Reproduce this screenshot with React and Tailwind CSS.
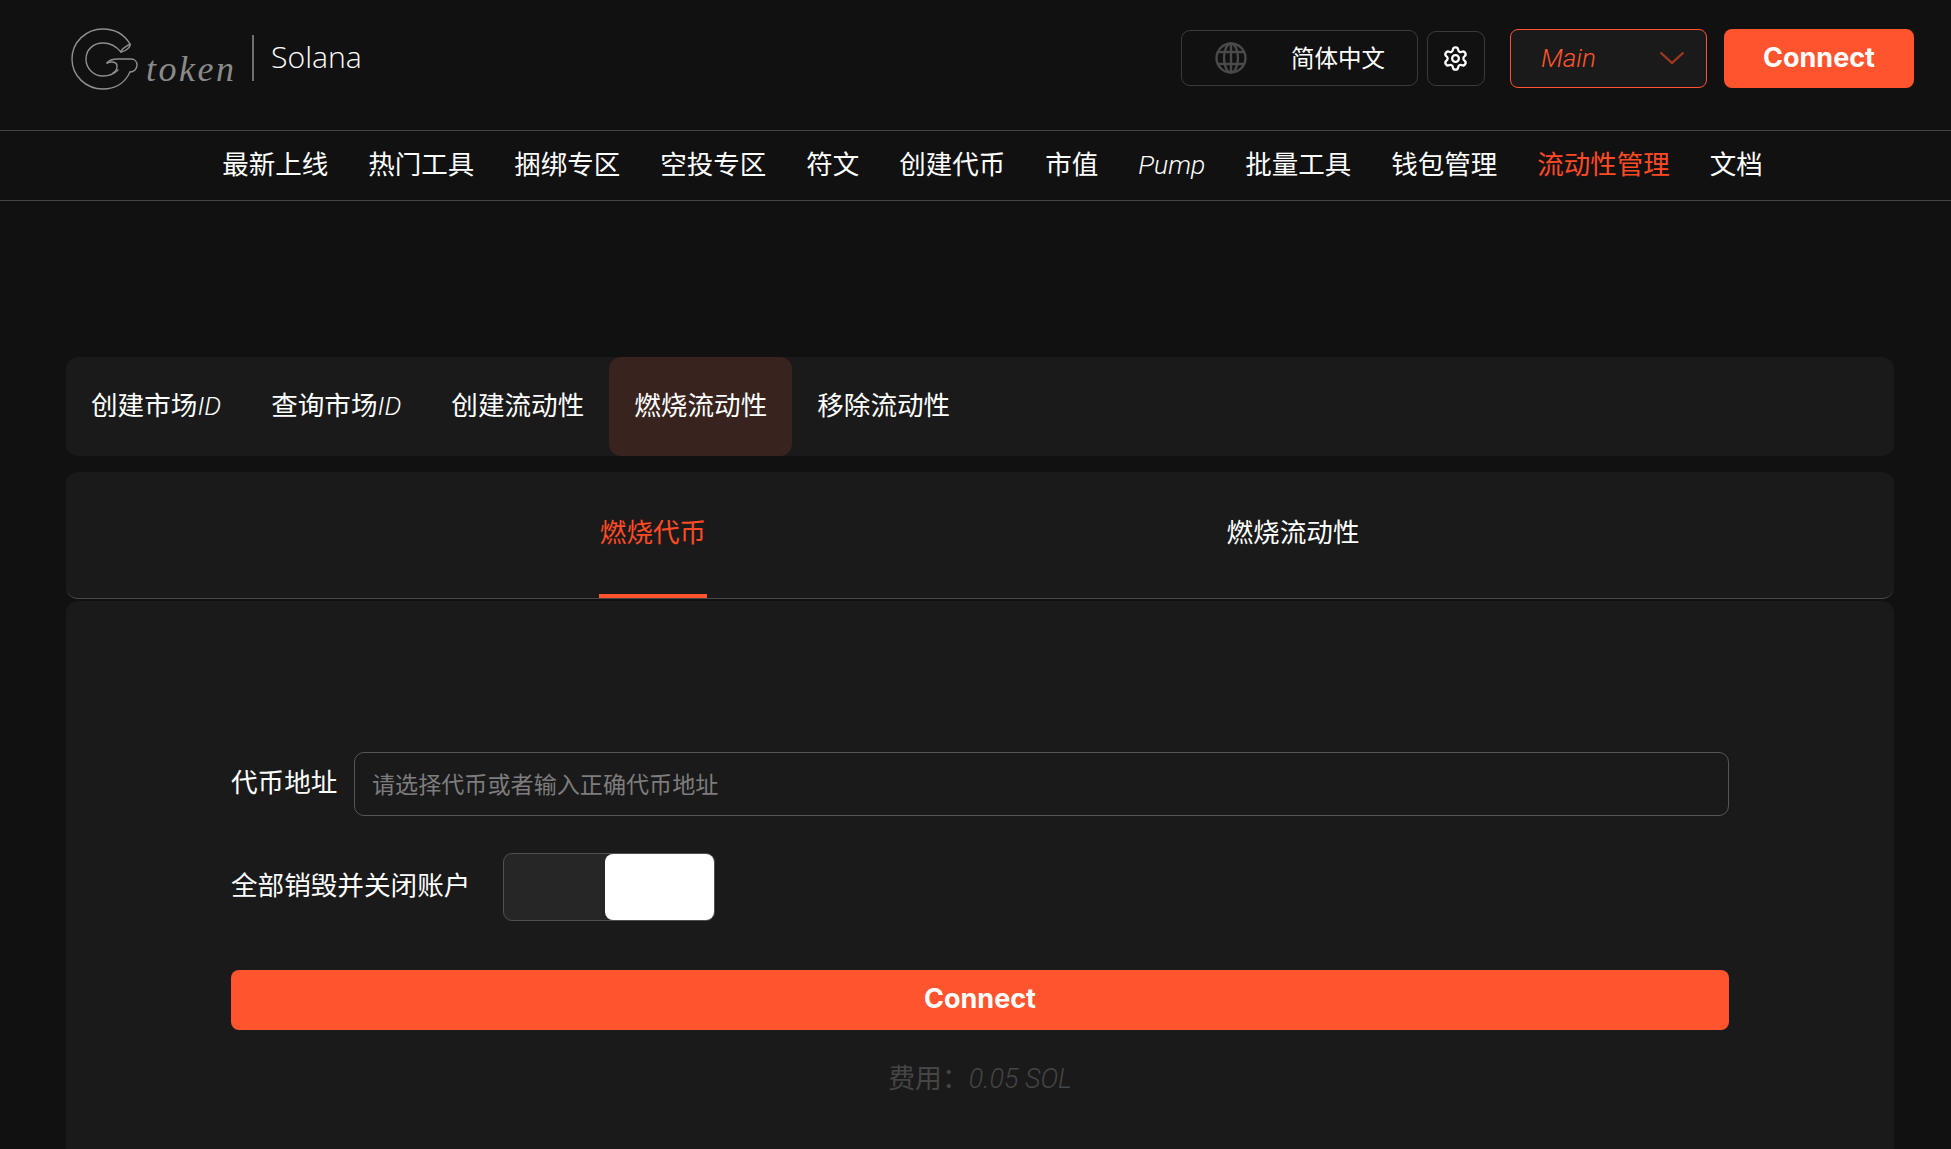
import React from "react";
import { Settings } from "lucide-react";

const cjk = "font-['Roboto','Noto_Sans_CJK_SC',sans-serif]";

function Logo() {
  return (
    <svg width="70" height="64" viewBox="70 26 70 64" fill="none" stroke="#8f8f8f" strokeWidth="1.4" strokeLinecap="round" className="shrink-0">
      <path d="M130 43 C124 33 114 28 103 28 C86 28 72 41 72 58 C72 75 86 88 103 88 C115 88 125 82 130 71" />
      <path d="M121 51 C116 45 110 42 103 42 C93 42 86 49 86 58 C86 68 94 75 103 75 C109 75 114 73 118 69" />
      <path d="M121 51 C121 48 127 45 130 43 C131 46 126 50 121 51 Z" />
      <path d="M107 62 C109 59 113 58 118 58 L131 58 C135 58 137 61 137 64 C137 68 134 71 130 71" />
      <path d="M107 62 C112 60 117 61 117 65 C117 68 115 71 113 72" />
    </svg>
  );
}

function Globe() {
  return (
    <svg width="32" height="32" viewBox="0 0 32 32" fill="none" stroke="#4a4a4a" strokeWidth="2.4" className="shrink-0">
      <circle cx="16" cy="16" r="14.5" />
      <ellipse cx="16" cy="16" rx="7" ry="14.5" />
      <path d="M16 1.5V30.5M3 10H29M3 22H29" />
    </svg>
  );
}

const navItems = ["最新上线", "热门工具", "捆绑专区", "空投专区", "符文", "创建代币", "市值", "Pump", "批量工具", "钱包管理", "流动性管理", "文档"];
const tabs = ["创建市场ID", "查询市场ID", "创建流动性", "燃烧流动性", "移除流动性"];

function Txt({ s }) {
  const m = s.match(/^([^A-Za-z]*)([A-Za-z]+)$/);
  if (!m) return s;
  return (
    <>
      {m[1]}
      <span className="italic font-light">{m[2]}</span>
    </>
  );
}

export default function App() {
  return (
    <div className={`h-[1149px] overflow-hidden bg-[#111111] text-white ${cjk}`}>
      <header className="h-[131px] border-b border-[#444444] flex items-start pl-[70px] pr-[37px]">
        <div className="flex items-start pt-[27px]">
          <Logo />
          <span className="font-['Liberation_Serif',serif] italic text-[36px] leading-none tracking-[2.5px] text-[#8a8a8a] ml-[6px] mt-[24px] w-[106px]">token</span>
          <div className="w-[2px] h-[46px] bg-[#6f6f6f] mt-[8px]" />
          <span className="font-['Open_Sans',sans-serif] font-light text-[30.2px] leading-none ml-[17px] mt-[15px]">Solana</span>
        </div>
        <div className="ml-auto flex items-start">
          <div className="mt-[30px] w-[237px] h-[56px] rounded-[9px] border border-[#3a3a3a] flex items-center pl-[33px]">
            <Globe />
            <span className="text-[23.5px] ml-[44px] leading-none pt-[3px]">简体中文</span>
          </div>
          <div className="mt-[31px] ml-[9px] w-[58px] h-[55px] rounded-[9px] border border-[#3a3a3a] flex items-center justify-center pr-[2px] pb-[1px]">
            <Settings size={27} strokeWidth={2} className="text-white" />
          </div>
          <div className="mt-[29px] ml-[25px] w-[197px] h-[59px] rounded-[8px] border border-[#ff542d] bg-[#1a1a1a] flex items-center pl-[30px] pr-[21px] justify-between">
            <span className="italic font-light text-[26px] leading-none text-[#ff542d] pb-[2px]">Main</span>
            <svg width="26" height="14" viewBox="0 0 26 14" fill="none" stroke="#a5391f" strokeWidth="2.2" className="mb-[2px]">
              <path d="M1.5 1.5L13 12L24.5 1.5" />
            </svg>
          </div>
          <button className="mt-[29px] ml-[17px] w-[190px] h-[59px] rounded-[8px] bg-[#ff542d] text-[27px] font-bold font-['Inter',sans-serif] text-white flex items-center justify-center">Connect</button>
        </div>
      </header>

      <nav className="h-[70px] border-b border-[#444444] flex items-center justify-center gap-[40px] pl-[34px] text-[26.5px] leading-none">
        {navItems.map((n) => (
          <span key={n} className={n === "流动性管理" ? "text-[#ff4a26]" : n === "Pump" ? "italic font-light" : ""}>{n}</span>
        ))}
      </nav>

      <main className="pl-[66px] pr-[57px] pt-[156px]">
        <div className="h-[99px] rounded-[12px] bg-[#1a1a1a] flex text-[26.6px]">
          {tabs.map((t, i) => (
            <div key={t} className={`px-[25px] flex items-center rounded-[12px] pb-[2px] ${i === 3 ? "bg-[#38231e]" : ""}`}>
              <span><Txt s={t} /></span>
            </div>
          ))}
        </div>

        <div className="mt-[16px] h-[127px] rounded-t-[12px] rounded-b-[12px] bg-[#1a1a1a] border-b border-[#4a4a4a] flex pl-[267px] text-[26.6px]">
          <div className="w-[640px] flex justify-center">
            <div className="h-[126px] border-b-4 border-[#ff542d] text-[#ff4a26] flex items-start pt-[43px] px-[0.5px] leading-[36px]">燃烧代币</div>
          </div>
          <div className="w-[640px] flex justify-center">
            <div className="h-[126px] flex items-start pt-[43px] leading-[36px]">燃烧流动性</div>
          </div>
        </div>

        <div className="mt-[2px] h-[600px] rounded-t-[12px] bg-[#1a1a1a] px-[165px] pt-[151px]">
          <div className="flex items-center h-[64px]">
            <label className="w-[123px] shrink-0 text-[26.6px] leading-none pb-[2px]">代币地址</label>
            <input
              placeholder="请选择代币或者输入正确代币地址"
              className="flex-1 h-[64px] rounded-[10px] border border-[#565656] bg-transparent pl-[17px] pr-[17px] pt-[3px] text-[23.1px] outline-none placeholder:text-[#7d7d7d]"
            />
          </div>
          <div className="flex items-center mt-[37px] h-[68px]">
            <label className="w-[272px] shrink-0 text-[26.6px] leading-none pb-[2px]">全部销毁并关闭账户</label>
            <div className="w-[212px] h-[68px] rounded-[9px] border border-[#505050] bg-[#262626] flex justify-end">
              <div className="w-[109px] h-full rounded-[8px] bg-white" />
            </div>
          </div>
          <button className="mt-[49px] w-full h-[60px] rounded-[8px] bg-[#ff542d] text-[27px] font-bold font-['Inter',sans-serif] text-white flex items-center justify-center pb-[2px]">Connect</button>
          <div className="mt-[31px] text-center text-[26.9px] leading-[36px] text-[#454545]">
            费用：<span className="italic font-light">0.05 SOL</span>
          </div>
        </div>
      </main>
    </div>
  );
}
